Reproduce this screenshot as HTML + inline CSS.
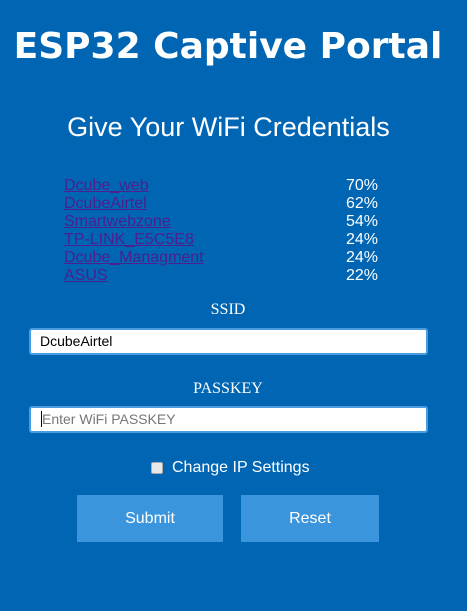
<!DOCTYPE html>
<html><head><style>
body{margin:0;width:467px;height:611px;background:#0066b4;font-family:"Liberation Sans",Arial,sans-serif;color:#fff;position:relative;overflow:hidden}
.a{position:absolute;white-space:nowrap}
h1{position:absolute;margin:0;left:0;width:456px;text-align:center;top:26px;font-size:36px;font-weight:bold;font-family:"DejaVu Sans",Verdana,sans-serif;white-space:nowrap}
h2{position:absolute;margin:0;left:0;width:457px;text-align:center;top:112px;font-size:27px;font-weight:normal}
.n{left:64px;color:#4b1f8e;text-decoration:underline;font-size:16px;line-height:18px}
.p{left:346px;font-size:16px;line-height:18px}
.l{font-family:"Liberation Serif",serif;font-size:16px;left:0;width:456px;text-align:center}
.in{position:absolute;left:29px;width:394px;height:23px;background:#fff;border:2px solid #4a9be0;border-radius:3px;font-size:14px;line-height:23px;padding-left:9px;box-sizing:content-box}
.b{position:absolute;top:495px;height:47px;background:#3a95dc;font-size:16px;line-height:47px;text-align:center}
</style></head><body>
<h1>ESP32 Captive Portal</h1>
<h2>Give Your WiFi Credentials</h2>
<div class="a n" style="top:177px">Dcube_web<br>DcubeAirtel<br>Smartwebzone<br>TP-LINK_E5C5E8<br>Dcube_Managment<br>ASUS</div>
<div class="a p" style="top:177px">70%<br>62%<br>54%<br>24%<br>24%<br>22%</div>
<div class="a l" style="top:301px">SSID</div>
<div class="in" style="top:328px;color:#000;width:386px">DcubeAirtel</div>
<div class="a l" style="top:380px">PASSKEY</div>
<div class="in" style="top:406px;color:#777;width:386px"><span style="border-left:1px solid #000;margin-left:1px"></span>Enter WiFi PASSKEY</div>
<div class="a" style="left:151px;top:462px;width:10px;height:10px;background:#e8e8e8;border:1px solid #aaa;border-radius:2px"></div>
<div class="a" style="left:172px;top:459px;font-size:16px">Change IP Settings</div>
<div class="b" style="left:77px;width:146px">Submit</div>
<div class="b" style="left:241px;width:138px">Reset</div>
</body></html>
